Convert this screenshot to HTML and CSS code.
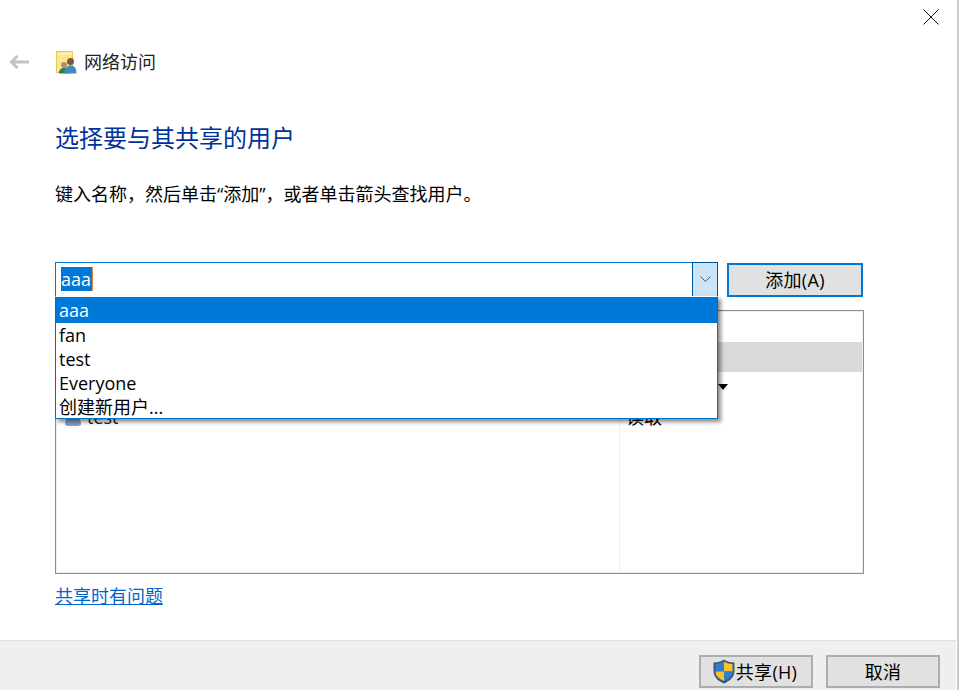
FILE: index.html
```html
<!DOCTYPE html>
<html lang="zh-CN">
<head>
  <meta charset="utf-8">
  <title>网络访问</title>
  <link rel="stylesheet" href="styles.css">
</head>
<body>

<div class="dialog">
  <div class="close-row">
    <svg class="close-icon" width="16" height="16" viewBox="0 0 16 16"><path d="M0.5 0.5L15.5 15.5M15.5 0.5L0.5 15.5" stroke="#111" fill="none"/></svg>
  </div>

  <div class="nav-row">
    <svg class="back-icon" width="20" height="14" viewBox="0 0 20 14"><path d="M8.5 1L2.5 7L8.5 13M2.5 7H20" stroke="#c4c4c4" stroke-width="3" fill="none"/></svg>
    <svg class="folder-icon" width="21" height="23" viewBox="0 0 21 23">
      <rect x="0.5" y="0.5" width="16" height="21" fill="#fbe78f" stroke="#e6c95f"/>
      <rect x="2" y="2" width="13" height="1.5" fill="#fff3bd"/>
      <circle cx="8" cy="14" r="3" fill="#b98d63"/>
      <path d="M3 22.5c0-4 2-5.5 5-5.500s5 1.500 5 5.500z" fill="#2f7d4f"/>
      <circle cx="14.500" cy="10.500" r="3.500" fill="#7a5a3c"/>
      <path d="M8.500 22.500c0-6 3-8 6-8s6 2 6 8z" fill="#3a8cc0"/>
    </svg>
    <span class="nav-title">网络访问</span>
  </div>

  <h1 class="heading">选择要与其共享的用户</h1>
  <p class="hint">键入名称，然后单击“添加”，或者单击箭头查找用户。</p>

  <div class="input-row">
    <div class="combo">
      <div class="combo-field"><span class="selected-text">aaa</span></div>
      <div class="combo-arrow">
        <svg width="11" height="7" viewBox="0 0 11 7"><path d="M0.500 0.500L5.500 5.500L10.500 0.500" stroke="#555" fill="none"/></svg>
      </div>
      <ul class="combo-menu">
        <li class="active">aaa</li>
        <li>fan</li>
        <li>test</li>
        <li>Everyone</li>
        <li>创建新用户...</li>
      </ul>
    </div>
    <button class="btn btn-add">添加(A)</button>
  </div>

  <div class="user-table">
    <div class="col-name">
      <div class="name-row">
        <svg width="18" height="18" viewBox="0 0 18 18"><circle cx="9" cy="5" r="4" fill="#a5bfd8"/><path d="M1 16c0-5 3-7 8-7s8 2 8 7c0 2-3 2-8 2s-8 0-8-2z" fill="#7f9fc2"/></svg>
        <span>test</span>
      </div>
    </div>
    <div class="col-level">
      <div class="level-selected"></div>
      <div class="level-arrow-row"><span class="level-arrow"></span></div>
      <div class="level-text">读取</div>
    </div>
  </div>

  <a class="help-link" href="#">共享时有问题</a>

  <div class="footer">
    <button class="btn btn-share">
      <svg width="22" height="25" viewBox="0 0 22 25">
        <path d="M11 0.500C8 2.500 5 3.500 0.500 3.500V12C0.500 18.500 6 22.500 11 24.500C16 22.500 21.500 18.500 21.500 12V3.500C17 3.500 14 2.500 11 0.500Z" fill="#3d5a78"/>
        <path d="M11 2.500V12.500H2.500V5C6 5 9 4 11 2.500Z" fill="#2f7fd0"/>
        <path d="M11 2.500C13 4 16 5 19.500 5V12.500H11Z" fill="#fbc02d"/>
        <path d="M2.500 12.500H11V22C7 20 2.500 17.500 2.500 12.500Z" fill="#fbc02d"/>
        <path d="M11 12.500H19.500C19.500 17.500 15 20 11 22Z" fill="#2f7fd0"/>
      </svg>
      <span>共享(H)</span>
    </button>
    <button class="btn">取消</button>
  </div>
</div>

</body>
</html>
```

FILE: styles.css
```css
* {
  box-sizing: border-box;
}

body {
  margin: 0;
  background: #fff;
  font-family: "Open Sans", "Noto Sans CJK SC", sans-serif;
  color: #000;
}

.dialog {
  width: 959px;
  height: 690px;
  display: flex;
  flex-direction: column;
  border-right: 2px solid #cccccc;
  overflow: hidden;
}

.close-row {
  height: 24px;
  padding: 9px 18px 0 0;
  display: flex;
  justify-content: flex-end;
}

.nav-row {
  height: 28px;
  margin-top: 24px;
  padding-left: 9px;
  display: flex;
  align-items: center;
}

.folder-icon {
  margin-left: 27px;
}

.nav-title {
  margin: 0 0 2px 7px;
  font-size: 18px;
  color: #222;
}

.heading {
  margin: 46px 0 0 55px;
  font-size: 24px;
  font-weight: 400;
  line-height: 32px;
  color: #003399;
}

.hint {
  margin: 28px 0 0 55px;
  font-size: 18px;
  line-height: 24px;
}

.input-row {
  margin: 56px 0 0 55px;
  display: flex;
  align-items: flex-start;
}

.combo {
  position: relative;
  width: 663px;
  height: 36px;
  display: flex;
  border: 1px solid #0078d7;
}

.combo-field {
  flex: 1;
  padding: 4px 0 0 5px;
  font-size: 18px;
  line-height: 24px;
}

.selected-text {
  display: inline-block;
  background: #0078d7;
  color: #fff;
  padding: 0 1px 0 0;
  height: 24px;
  border-right: 1px solid #e8833a;
}

.combo-arrow {
  width: 26px;
  margin: -1px -1px 0 0;
  background: #cce4f7;
  border: 1px solid #005499;
  display: flex;
  align-items: center;
  justify-content: center;
}

.combo-menu {
  position: absolute;
  top: 33px;
  left: -1px;
  width: 663px;
  height: 123px;
  margin: 0;
  padding: 0;
  list-style: none;
  background: #fff;
  border: 1px solid #0070c4;
  border-top-color: #fff;
  box-shadow: 3px 3px 4px rgba(0, 0, 0, 0.45);
  font-size: 18px;
  line-height: 24px;
  z-index: 2;
}

.combo-menu li {
  padding-left: 3px;
}

.combo-menu li.active {
  background: #0078d7;
  color: #fff;
  height: 26px;
  padding-top: 1px;
}

.btn {
  width: 114px;
  height: 33px;
  background: #e1e1e1;
  border: 2px solid #adadad;
  font-family: inherit;
  font-size: 18px;
  letter-spacing: 0.3px;
  color: #000;
  padding: 0 0 2px;
}

.btn-add {
  width: 136px;
  height: 34px;
  margin: 1px 0 0 9px;
  border-color: #0078d7;
}

.user-table {
  margin: 12px 0 0 55px;
  width: 809px;
  height: 264px;
  display: flex;
  border: 1px solid #8c8c8f;
  box-shadow: inset 0 0 0 1px #eceef2;
}

.col-name {
  width: 564px;
  border-right: 1px solid #eef1f6;
  padding: 95px 0 0 8px;
}

.name-row {
  display: flex;
  align-items: center;
  gap: 5px;
  font-size: 18px;
  line-height: 22px;
  color: #222;
}

.col-level {
  flex: 1;
  margin-right: 1px;
  padding-top: 31px;
}

.level-selected {
  height: 30px;
  background: #d9d9d9;
}

.level-arrow-row {
  height: 14px;
  padding: 12px 0 0 98px;
}

.level-arrow {
  display: block;
  width: 0;
  height: 0;
  border-left: 5px solid transparent;
  border-right: 5px solid transparent;
  border-top: 6px solid #000;
}

.level-text {
  margin-top: 20px;
  padding-left: 6px;
  font-size: 18px;
  line-height: 22px;
}

.help-link {
  margin: 10px 0 0 55px;
  font-size: 18px;
  line-height: 24px;
  color: #0066cc;
  width: max-content;
}

.footer {
  margin: 32px 1px 0 0;
  flex: 1;
  background: #efefef;
  border-top: 1px solid #dfdfdf;
  padding: 14px 16px 0 0;
  display: flex;
  justify-content: flex-end;
  gap: 13px;
}

.btn-share {
  display: flex;
  align-items: center;
  justify-content: center;
  gap: 1px;
  padding: 0 2px 0 0;
}

.btn-share span {
  padding-bottom: 2px;
}
```
